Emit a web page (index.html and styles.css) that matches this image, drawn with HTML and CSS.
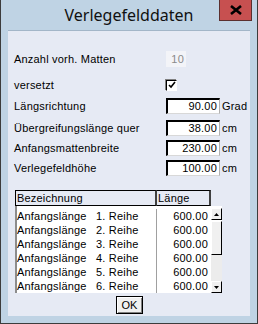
FILE: index.html
```html
<!DOCTYPE html>
<html lang="de">

<head>
    <meta charset="UTF-8">
    <meta name="viewport" content="width=device-width, initial-scale=1.0">
    <title>Verlegefelddaten</title>
    <link rel="stylesheet" href="styles.css">
</head>

<body>
    <div class="window">
        <div class="titlebar">
            <h1 class="title">Verlegefelddaten</h1>
            <div class="close">
                <svg width="12" height="10" viewBox="0 0 12 10">
                    <path d="M1 1 L11 9 M11 1 L1 9" stroke="#000" stroke-width="2.6" />
                </svg>
            </div>
        </div>

        <div class="client">
            <!-- Eingaben -->
            <div class="row row-count">
                <span class="label">Anzahl vorh. Matten</span>
                <span class="readonly">10</span>
            </div>
            <div class="row row-check">
                <span class="label">versetzt</span>
                <span class="check">
                    <svg width="8" height="8" viewBox="0 0 8 8">
                        <path d="M1 4 L3 6 L7 1" stroke="#000" stroke-width="1.6" fill="none" />
                    </svg>
                </span>
            </div>
            <div class="row row-first">
                <span class="label">Längsrichtung</span>
                <span class="field">90.00</span>
                <span class="unit">Grad</span>
            </div>
            <div class="row">
                <span class="label">Übergreifungslänge quer</span>
                <span class="field">38.00</span>
                <span class="unit">cm</span>
            </div>
            <div class="row">
                <span class="label">Anfangsmattenbreite</span>
                <span class="field">230.00</span>
                <span class="unit">cm</span>
            </div>
            <div class="row">
                <span class="label">Verlegefeldhöhe</span>
                <span class="field">100.00</span>
                <span class="unit">cm</span>
            </div>

            <!-- Liste -->
            <div class="list">
                <div class="list-head">
                    <span class="col-name">Bezeichnung</span>
                    <span class="col-len">Länge</span>
                </div>
                <div class="list-main">
                    <div class="list-body">
                        <div class="line"><span class="c1">Anfangslänge</span><span class="c2">1. Reihe</span><span class="c3">600.00</span></div>
                        <div class="line"><span class="c1">Anfangslänge</span><span class="c2">2. Reihe</span><span class="c3">600.00</span></div>
                        <div class="line"><span class="c1">Anfangslänge</span><span class="c2">3. Reihe</span><span class="c3">600.00</span></div>
                        <div class="line"><span class="c1">Anfangslänge</span><span class="c2">4. Reihe</span><span class="c3">600.00</span></div>
                        <div class="line"><span class="c1">Anfangslänge</span><span class="c2">5. Reihe</span><span class="c3">600.00</span></div>
                        <div class="line"><span class="c1">Anfangslänge</span><span class="c2">6. Reihe</span><span class="c3">600.00</span></div>
                    </div>
                    <div class="scroll">
                        <div class="arrow up"><svg width="5" height="3" viewBox="0 0 5 3"><path d="M2.5 0 L5 3 L0 3 Z" /></svg></div>
                        <div class="thumb"></div>
                        <div class="track"></div>
                        <div class="arrow down"><svg width="5" height="3" viewBox="0 0 5 3"><path d="M0 0 L5 0 L2.5 3 Z" /></svg></div>
                    </div>
                </div>
            </div>

            <div class="buttons">
                <button class="ok">OK</button>
            </div>
        </div>
    </div>
</body>

</html>
```

FILE: styles.css
```css
* {
    margin: 0;
    padding: 0;
    box-sizing: border-box;
}

body {
    width: 258px;
    height: 324px;
    overflow: hidden;
    font-family: "Liberation Sans", Arial, sans-serif;
    font-size: 11px;
    letter-spacing: 0.2px;
    color: #000;
}

.window {
    width: 258px;
    height: 324px;
    background: #bfd3e4;
    border: 1px solid #3c3c3c;
    border-top: none;
    padding: 0 7px 7px;
    display: flex;
    flex-direction: column;
}

/* title */
.titlebar {
    height: 30px;
    position: relative;
    display: flex;
    justify-content: center;
}

.title {
    font-family: "Noto Sans", sans-serif;
    font-weight: normal;
    font-size: 16px;
    letter-spacing: 0;
    line-height: 30px;
    color: #101010;
}

.close {
    position: absolute;
    top: 0;
    right: -2px;
    width: 33px;
    height: 21px;
    background: #c75050;
    border: 1px solid #5b2f2f;
    border-top: none;
    display: flex;
    align-items: center;
    justify-content: center;
}

/* client */
.client {
    flex: 1;
    background: #e6eaf4;
    border-top: 1px solid #a3b6c8;
    padding: 19px 0 0 6px;
}

.row {
    display: flex;
    align-items: center;
    height: 20px;
}

.label {
    width: 152px;
}

.row-count {
    height: 17px;
    margin-bottom: 9px;
}

.readonly {
    width: 20px;
    height: 16px;
    background: #f3f4f8;
    color: #8a8a8a;
    text-align: right;
    padding-right: 2px;
    line-height: 16px;
}

.row-check {
    height: 18px;
    margin-bottom: 2px;
}

.check {
    width: 11px;
    height: 11px;
    background: #fff;
    border-top: 1px solid #000;
    border-left: 1px solid #000;
    border-right: 1px solid #fff;
    border-bottom: 1px solid #fff;
    box-shadow: -1px -1px 0 #808080;
    display: flex;
    align-items: center;
    justify-content: center;
}

.row-first {
    height: 20px;
    margin-bottom: 2px;
}

.field {
    width: 54px;
    height: 16px;
    background: #fff;
    border-top: 2px solid #000;
    border-left: 2px solid #000;
    border-right: 1px solid #b0b0b0;
    border-bottom: 1px solid #d8d8d8;
    text-align: right;
    padding-right: 2px;
    line-height: 13px;
}

.unit {
    margin-left: 2px;
}

/* list */
.list {
    margin-top: 12px;
    margin-left: 1px;
    width: 207px;
}

.list-head {
    display: flex;
    height: 16px;
    width: 196px;
}

.list-head span {
    border: 1px solid #000;
    border-right: 2px solid #404040;
    line-height: 14px;
    padding-left: 1px;
}

.col-name {
    width: 142px;
}

.col-len {
    width: 54px;
    border-left: none !important;
}

.list-main {
    display: flex;
    height: 87px;
}

.list-body {
    width: 196px;
    background: #fff;
    border-left: 2px solid #8c8c8c;
    padding-top: 3px;
}

.line {
    display: flex;
    height: 14px;
    line-height: 14px;
}

.c1 {
    width: 79px;
}

.c2 {
    width: 61px;
    border-right: 1px solid #a0a0a0;
}

.c3 {
    width: 52px;
    text-align: right;
    padding-right: 1px;
}

.scroll {
    width: 11px;
    display: flex;
    flex-direction: column;
    padding-top: 2px;
    background: #fff;
}

.arrow {
    height: 12px;
    background: #f0f0f0;
    border: 1px solid;
    border-color: #fff #000 #000 #fff;
    display: flex;
    align-items: center;
    justify-content: center;
}

.thumb {
    height: 34px;
    margin-top: 1px;
    background: #f0f0f0;
    border: 1px solid;
    border-color: #fff #000 #000 #fff;
}

.track {
    flex: 1;
    background: #ececec;
}

.buttons {
    display: flex;
    justify-content: center;
    margin-top: 3px;
    padding-right: 5px;
}

.ok {
    width: 27px;
    height: 18px;
    font-family: "Liberation Sans", Arial, sans-serif;
    font-size: 11px;
    background: #f0f0f0;
    border: 1px solid #000;
    box-shadow: inset 1px 1px 0 #fff, inset -1px -1px 0 #808080;
}
```
